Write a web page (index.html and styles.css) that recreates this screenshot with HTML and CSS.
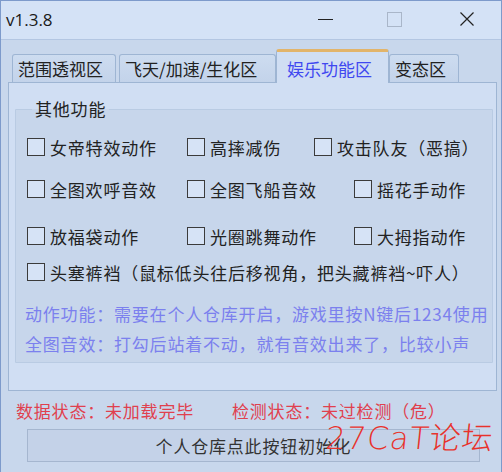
FILE: index.html
```html
<!DOCTYPE html>
<html lang="zh-CN">
<head>
    <meta charset="UTF-8">
    <title>v1.3.8</title>
    <link rel="stylesheet" href="styles.css">
</head>
<body>
    <div class="window">
        <div class="titlebar">
            <span class="title">v1.3.8</span>
            <div class="controls">
                <span class="ctl ctl-min"></span>
                <span class="ctl ctl-max"></span>
                <span class="ctl ctl-close">
                    <svg width="14" height="14" viewBox="0 0 14 14"><path d="M0.5 0.5 L13.5 13.5 M13.5 0.5 L0.5 13.5" stroke="#222" stroke-width="1.2"/></svg>
                </span>
            </div>
        </div>
        <div class="client">
            <div class="tabs">
                <div class="tab tab-1">范围透视区</div>
                <div class="tab tab-2">飞天/加速/生化区</div>
                <div class="tab tab-active">娱乐功能区</div>
                <div class="tab tab-4">变态区</div>
            </div>
            <div class="panel">
                <fieldset class="group">
                    <legend>其他功能</legend>
                    <div class="row row-1">
                        <label class="chk c1"><span class="box"></span>女帝特效动作</label>
                        <label class="chk c2-short"><span class="box"></span>高摔减伤</label>
                        <label class="chk"><span class="box"></span>攻击队友（恶搞）</label>
                    </div>
                    <div class="row row-2">
                        <label class="chk c1"><span class="box"></span>全图欢呼音效</label>
                        <label class="chk c2"><span class="box"></span>全图飞船音效</label>
                        <label class="chk"><span class="box"></span>摇花手动作</label>
                    </div>
                    <div class="row row-3">
                        <label class="chk c1"><span class="box"></span>放福袋动作</label>
                        <label class="chk c2"><span class="box"></span>光圈跳舞动作</label>
                        <label class="chk"><span class="box"></span>大拇指动作</label>
                    </div>
                    <div class="row row-4">
                        <label class="chk"><span class="box"></span>头塞裤裆（鼠标低头往后移视角，把头藏裤裆~吓人）</label>
                    </div>
                    <p class="note note-1">动作功能：需要在个人仓库开启，游戏里按N键后1234使用</p>
                    <p class="note">全图音效：打勾后站着不动，就有音效出来了，比较小声</p>
                </fieldset>
            </div>
            <div class="status">
                <span class="stat stat-data">数据状态：未加载完毕</span>
                <span class="stat">检测状态：未过检测（危）</span>
            </div>
            <button class="init-btn">个人仓库点此按钮初始化</button>
            <div class="watermark">27CaT论坛</div>
        </div>
    </div>
</body>
</html>
```

FILE: styles.css
```css
html, body {
    margin: 0;
    padding: 0;
}
body {
    width: 502px;
    height: 472px;
    overflow: hidden;
    background-color: #c8d7ec;
    font-family: "Noto Sans CJK SC", sans-serif;
    color: #222;
}
.window {
    height: 472px;
    box-sizing: border-box;
    border: 1px solid #7d9acb;
    border-bottom: none;
    display: flex;
    flex-direction: column;
}
.titlebar {
    height: 38px;
    flex: none;
    background-color: #d4e2f6;
    border-bottom: 1px solid #b3c6e2;
    display: flex;
    align-items: center;
    justify-content: space-between;
}
.title {
    font-family: "Open Sans", sans-serif;
    font-size: 17px;
    margin-left: 5px;
    margin-top: -1px;
    color: #1a1a1a;
}
.controls {
    display: flex;
    align-items: center;
    height: 100%;
}
.ctl {
    display: flex;
    align-items: center;
    justify-content: center;
}
.ctl-min {
    width: 15px;
    height: 1px;
    background-color: #222;
    margin-right: 54px;
    margin-top: -1px;
}
.ctl-max {
    width: 13px;
    height: 13px;
    border: 1px solid #a9b6c9;
    margin-right: 58px;
    margin-top: -2px;
}
.ctl-close {
    width: 14px;
    height: 14px;
    margin-right: 27px;
    margin-top: -2px;
}
.client {
    flex: 1;
    position: relative;
    background-color: #c8d7ec;
}
.tabs {
    display: flex;
    align-items: flex-end;
    height: 42px;
    padding-left: 11px;
    position: relative;
    z-index: 1;
}
.tab {
    height: 28px;
    box-sizing: border-box;
    border: 1px solid #9eb5d3;
    border-bottom: none;
    border-radius: 3px 3px 0 0;
    background: linear-gradient(#cddcf0, #c3d3ea);
    font-size: 17px;
    line-height: 28px;
    padding: 0 5px;
    margin-right: 3px;
    color: #222;
    white-space: nowrap;
}
.tab-1 { width: 104px; }
.tab-2 { width: 157px; margin-right: 0; }
.tab-active {
    width: 113px;
    height: 34px;
    margin-right: 0;
    margin-bottom: -1px;
    line-height: 33px;
    padding: 0 0 0 10px;
    background: #d0def3;
    border-top: 3px solid #e2b46a;
    color: #3f48f0;
}
.tab-4 { width: 70px; }
.panel {
    margin: 0 4px 0 7px;
    height: 309px;
    box-sizing: border-box;
    border: 1px solid #9eb5d3;
    background-color: #d0def3;
    padding: 16px 3px 0 6px;
}
.group {
    margin: 0;
    height: 264px;
    box-sizing: border-box;
    border: 1px solid #b9cbe3;
    border-radius: 1px;
    background-color: #c7d6eb;
    padding: 0 0 0 11px;
}
.group legend {
    font-size: 17px;
    letter-spacing: 0.8px;
    padding: 0 3px;
    margin-left: 5px;
    line-height: 20px;
    color: #222;
}
.row {
    display: flex;
    align-items: center;
    height: 20px;
}
.row-1 { margin-top: 18px; }
.row-2 { margin-top: 22px; }
.row-3 { margin-top: 27px; }
.row-4 { margin-top: 16px; }
.chk {
    display: flex;
    align-items: center;
    font-size: 17px;
    letter-spacing: 0.8px;
    white-space: nowrap;
}
.c1 { width: 160px; }
.c2 { width: 167px; }
.c2-short { width: 127px; }
.box {
    width: 16px;
    height: 16px;
    border: 1px solid #3b3b3b;
    background-color: #d6e3f6;
    margin-right: 5px;
    flex: none;
}
.note {
    margin: 0;
    font-size: 17px;
    letter-spacing: 0.8px;
    color: #7b80ee;
    line-height: 22px;
    white-space: nowrap;
    margin-left: -2px;
}
.note-1 { margin-top: 21px; margin-bottom: 8px; }
.status {
    display: flex;
    font-size: 17px;
    letter-spacing: 0.8px;
    color: #e0404e;
    padding: 7px 0 0 15px;
    height: 30px;
    box-sizing: border-box;
}
.stat-data { width: 216px; }
.init-btn {
    display: block;
    margin: 8px 0 0 26px;
    width: 453px;
    height: 33px;
    border: 1px solid #a5b6cf;
    background-color: #c4d2e8;
    font-family: "Noto Sans CJK SC", sans-serif;
    font-size: 17px;
    letter-spacing: 0.8px;
    color: #333;
    padding: 0;
}
.watermark {
    position: absolute;
    left: 325px;
    top: 373px;
    font-family: "DejaVu Sans", "Noto Sans CJK SC", sans-serif;
    font-size: 31px;
    font-weight: 300;
    color: #e8322c;
    letter-spacing: 1px;
    transform: skewX(-6deg);
    white-space: nowrap;
}
```
